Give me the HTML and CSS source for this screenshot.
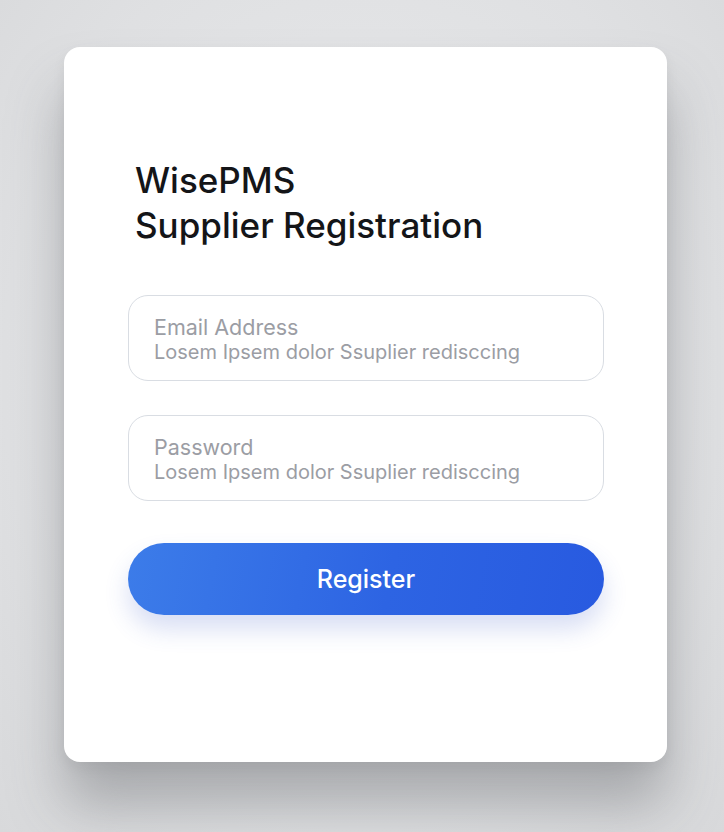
FILE: index.html
```html
<!DOCTYPE html>
<html lang="en">
<head>
  <meta charset="UTF-8" />
  <meta name="viewport" content="width=device-width, initial-scale=1.0" />
  <title>WisePMS Supplier Registration</title>
  <link rel="stylesheet" href="styles.css">
</head>
<body>
  <div class="register-card">
    <h1>WisePMS<br>Supplier Registration</h1>

    <form class="register-form">
      <label class="field">
        <span class="field-label">Email Address</span>
        <span class="field-hint">Losem Ipsem dolor Ssuplier redisccing</span>
      </label>

      <label class="field">
        <span class="field-label">Password</span>
        <span class="field-hint">Losem Ipsem dolor Ssuplier redisccing</span>
      </label>

      <button type="button">Register</button>
    </form>
  </div>
</body>
</html>
```

FILE: styles.css
```css
* {
  margin: 0;
  padding: 0;
  box-sizing: border-box;
  font-family: Inter, 'Noto Sans', sans-serif;
}

body {
  height: 100vh;
  background: radial-gradient(ellipse at 50% 45%, #ebecee 0%, #dfe0e2 70%, #d8d9db 100%);
  padding: 47px 57px 0 64px;
}

.register-card {
  width: 603px;
  height: 715px;
  background: #fff;
  border-radius: 16px;
  padding: 111px 63px 0 64px;
  box-shadow: 0 44px 56px rgba(80, 82, 88, 0.38), 0 6px 14px rgba(0, 0, 0, 0.06);
}

h1 {
  font-size: 35px;
  font-weight: 500;
  line-height: 45px;
  color: #141518;
  padding-left: 7px;
  letter-spacing: 0;
}

.register-form {
  display: flex;
  flex-direction: column;
  gap: 34px;
  margin-top: 47px;
}

.field {
  display: flex;
  flex-direction: column;
  justify-content: center;
  height: 86px;
  padding: 2px 25px 0;
  border: 1.5px solid #d9dde3;
  border-radius: 20px;
  color: #9b9da4;
}

.field-label {
  font-size: 21.5px;
  line-height: 26px;
}

.field-hint {
  font-size: 20px;
  line-height: 24px;
}

button {
  margin-top: 8px;
  height: 72px;
  border: none;
  border-radius: 36px;
  background: linear-gradient(100deg, #3c7ce9 0%, #2d64e3 55%, #285ae0 100%);
  color: #fff;
  font-size: 25px;
  font-weight: 500;
  box-shadow: 0 14px 24px rgba(60, 90, 200, 0.2);
  cursor: pointer;
}
```
